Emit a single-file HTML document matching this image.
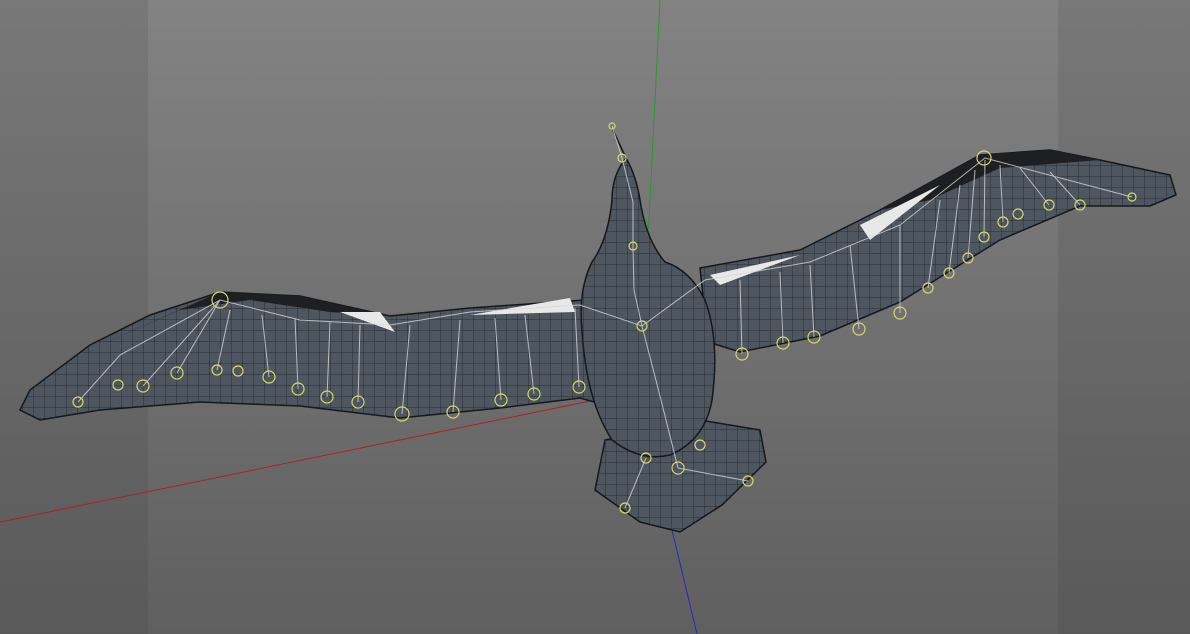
<!DOCTYPE html>
<html><head><meta charset="utf-8"><style>
html,body{margin:0;padding:0;width:1190px;height:634px;overflow:hidden;background:#6a6a6a}
svg{display:block}
</style></head><body>
<svg width="1190" height="634" viewBox="0 0 1190 634" xmlns="http://www.w3.org/2000/svg">
<defs>
<linearGradient id="bg" x1="0" y1="0" x2="0" y2="1">
<stop offset="0" stop-color="#838383"/><stop offset="1" stop-color="#5f5f5f"/></linearGradient>
<linearGradient id="bgs" x1="0" y1="0" x2="0" y2="1">
<stop offset="0" stop-color="#787878"/><stop offset="1" stop-color="#595959"/></linearGradient>
<pattern id="grid" width="11" height="11" patternUnits="userSpaceOnUse">
<rect width="11" height="11" fill="#4e5660"/><path d="M0 0H11M0 0V11" stroke="#1e2228" stroke-width="0.8"/></pattern>
</defs>
<rect width="1190" height="634" fill="url(#bg)"/>
<rect width="148" height="634" fill="url(#bgs)"/>
<rect x="1058" width="132" height="634" fill="url(#bgs)"/>
<line x1="660" y1="0" x2="645" y2="300" stroke="#2a9a2a" stroke-width="1"/>
<line x1="0" y1="522" x2="595" y2="400" stroke="#b02020" stroke-width="1"/>
<line x1="672" y1="530" x2="697" y2="634" stroke="#2030b0" stroke-width="1"/>
<!-- left wing -->
<path d="M585 300 L470 308 L390 316 L300 296 L220 292 L150 315 L90 345 L30 390 L20 410 L40 420 L100 410 L200 402 L300 406 L400 418 L500 408 L580 398 L605 405 Z" fill="url(#grid)" stroke="#15181c" stroke-width="1.5"/>
<path d="M100 345 L220 292 L300 296 L390 316 L330 312 L250 300 L180 310 Z" fill="#1d1f22"/>
<path d="M340 312 L395 332 L380 312 Z M470 315 L570 298 L575 312 Z" fill="#e8e8e8"/>
<!-- right wing -->
<path d="M700 268 L800 250 L880 210 L980 155 L1050 150 L1100 160 L1170 175 L1176 195 L1150 206 L1080 206 L1000 240 L900 302 L820 336 L740 352 L708 342 Z" fill="url(#grid)" stroke="#15181c" stroke-width="1.5"/>
<path d="M880 210 L980 155 L1050 150 L1100 160 L1000 168 L930 200 Z" fill="#1d1f22"/>
<path d="M710 275 L800 255 L720 285 Z M860 225 L940 185 L870 240 Z" fill="#e8e8e8"/>
<!-- tail -->
<path d="M605 440 L595 490 L640 522 L680 532 L722 505 L766 462 L760 430 L700 420 Z" fill="url(#grid)" stroke="#15181c" stroke-width="1.5"/>
<!-- body -->
<path d="M612 128 L626 158 Q612 175 612 200 Q608 240 592 262 Q578 290 582 330 Q586 400 612 440 Q640 462 670 455 Q705 440 712 400 Q720 340 705 300 Q690 270 665 262 Q646 240 640 200 Q636 175 626 158 Z" fill="url(#grid)" stroke="#15181c" stroke-width="1.5"/>
<!-- bones -->
<g stroke="#d8d8d8" stroke-width="1" fill="none" opacity="0.8">
<path d="M612 126 L622 158 L633 202 L633 246 L634 290 L642 326 L660 396 L678 468 M646 458 L625 508 M678 468 L748 481"/>
<path d="M642 326 L580 305 L470 312 L390 325 L300 320 L220 300 L120 355 L78 402"/>
<path d="M642 326 L705 280 L810 262 L900 225 L985 158 L1132 197"/>
<path d="M220 300 L143 386 M220 300 L177 373 M230 310 L217 370 M262 315 L269 377 M295 318 L298 389 M330 322 L327 397 M360 325 L358 402 M410 325 L402 414 M460 320 L453 412 M495 318 L501 400 M525 315 L534 394 M575 308 L579 387"/>
<path d="M740 280 L742 354 M780 272 L783 343 M810 265 L814 337 M850 245 L859 329 M900 225 L900 313 M940 200 L928 288 M960 185 L949 273 M975 170 L968 258 M985 160 L984 237 M1000 165 L1003 222 M1020 168 L1049 205 M1050 172 L1080 205"/>
</g>
<g fill="none" stroke="#d8d86a" stroke-width="1.2">
<circle cx="612" cy="126" r="3"/><circle cx="622" cy="158" r="4"/><circle cx="633" cy="246" r="4"/><circle cx="642" cy="326" r="5"/>
<circle cx="220" cy="300" r="8"/><circle cx="78" cy="402" r="5"/><circle cx="118" cy="385" r="5"/><circle cx="143" cy="386" r="6"/><circle cx="177" cy="373" r="6"/><circle cx="217" cy="370" r="5"/><circle cx="238" cy="371" r="5"/><circle cx="269" cy="377" r="6"/><circle cx="298" cy="389" r="6"/><circle cx="327" cy="397" r="6"/><circle cx="358" cy="402" r="6"/><circle cx="402" cy="414" r="7"/><circle cx="453" cy="412" r="6"/><circle cx="501" cy="400" r="6"/><circle cx="534" cy="394" r="6"/><circle cx="579" cy="387" r="6"/>
<circle cx="984" cy="158" r="7"/><circle cx="1132" cy="197" r="4"/><circle cx="1080" cy="205" r="5"/><circle cx="1049" cy="205" r="5"/><circle cx="1018" cy="214" r="5"/><circle cx="1003" cy="222" r="5"/><circle cx="984" cy="237" r="5"/><circle cx="968" cy="258" r="5"/><circle cx="949" cy="273" r="5"/><circle cx="928" cy="288" r="5"/><circle cx="900" cy="313" r="6"/><circle cx="859" cy="329" r="6"/><circle cx="814" cy="337" r="6"/><circle cx="783" cy="343" r="6"/><circle cx="742" cy="354" r="6"/>
<circle cx="625" cy="508" r="5"/><circle cx="748" cy="481" r="5"/><circle cx="678" cy="468" r="6"/><circle cx="700" cy="445" r="5"/><circle cx="646" cy="458" r="5"/>
</g>
</svg>
</body></html>
